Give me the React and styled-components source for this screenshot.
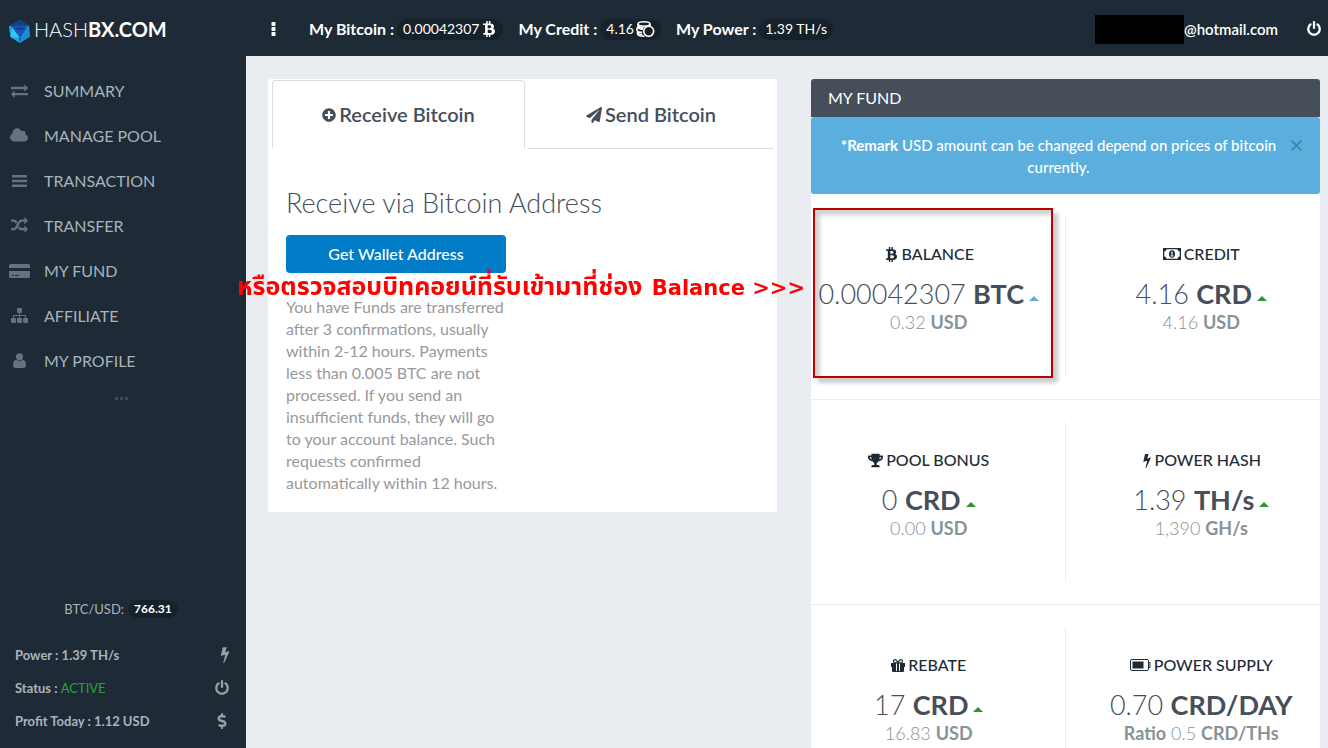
import React from "react";
import styled, { createGlobalStyle } from "styled-components";
import { FaBtc, FaPaperPlane, FaPlusCircle, FaTrophy, FaDollarSign } from "react-icons/fa";

const GlobalStyle = createGlobalStyle`
  * { box-sizing: border-box; }
  body {
    margin: 0;
    background: #e9ecf1;
    font-family: Lato, "Liberation Sans", sans-serif;
    font-size: 15px;
    line-height: 22px;
    color: #454e59;
  }
  b { font-weight: 700; }
`;

const Shell = styled.div`
  display: grid;
  grid-template-columns: 246px minmax(0, 1fr);
  height: 100vh;
  overflow-y: auto;
  scrollbar-width: none;
`;

const Sidebar = styled.aside`
  position: sticky;
  top: 0;
  height: 100vh;
  display: flex;
  flex-direction: column;
  background: #1e2b36;
  color: #a9b3bd;
`;

const Brand = styled.a`
  display: flex;
  align-items: center;
  gap: 4px;
  height: 56px;
  padding: 6px 9px 0;
  color: #fff;
  font-size: 20px;
  font-weight: 300;
  text-decoration: none;
  span { padding-bottom: 4px; }
`;

const Nav = styled.nav`
  padding-top: 12px;
`;

const NavLink = styled.a`
  display: grid;
  grid-template-columns: 22px 1fr;
  column-gap: 14px;
  align-items: center;
  height: 45px;
  padding-left: 8px;
  color: #a9b3bd;
  font-size: 16px;
  text-decoration: none;
  svg { justify-self: center; color: #66727e; }
`;

const More = styled.div`
  display: flex;
  justify-content: center;
  gap: 2px;
  padding: 14px 4px 0 0;
  i { width: 3px; height: 3px; background: #3f4b56; }
`;

const SideFoot = styled.div`
  margin-top: auto;
  padding-bottom: 11px;
  font-size: 13px;
`;

const Rate = styled.div`
  display: flex;
  align-items: center;
  justify-content: center;
  gap: 4px;
  height: 24px;
  margin-bottom: 17px;
  padding-right: 4px;
`;

const Pill = styled.span`
  display: inline-flex;
  align-items: center;
  gap: 2px;
  height: ${(p) => (p.$small ? 18 : 21)}px;
  padding: 0 6px;
  border-radius: 11px;
  background: #16212a;
  color: #fff;
  font-size: ${(p) => (p.$small ? 12 : 14)}px;
  font-weight: ${(p) => (p.$small ? 700 : 400)};
`;

const Stat = styled.div`
  display: flex;
  align-items: center;
  justify-content: space-between;
  height: 33px;
  padding: 0 16px 0 15px;
  font-weight: 700;
  em { color: #2f9e3f; font-style: normal; font-weight: 400; }
  svg { color: #9c9fa2; }
`;

const Column = styled.div`
  min-width: 0;
`;

const TopBar = styled.header`
  position: sticky;
  top: 0;
  z-index: 5;
  display: flex;
  align-items: center;
  height: 56px;
  padding: 2px 6px 0 0;
  background: #1e2b36;
  color: #fff;
`;

const IconButton = styled.button`
  display: inline-flex;
  align-items: center;
  justify-content: center;
  padding: 0;
  border: 0;
  background: none;
  color: inherit;
  cursor: pointer;
`;

const MenuButton = styled(IconButton)`
  width: 24px;
  margin: 0 24px 0 15px;
`;

const Figures = styled.div`
  display: flex;
  gap: 15px;
`;

const Figure = styled.div`
  display: flex;
  align-items: center;
  gap: 3px;
  font-size: 16px;
  font-weight: 700;
`;

const Account = styled.div`
  display: flex;
  align-items: center;
  margin: 0 28px 0 auto;
  font-weight: 600;
`;

const HiddenName = styled.span`
  width: 89px;
  height: 29px;
  background: #000;
`;

const Main = styled.main`
  display: grid;
  grid-template-columns: repeat(2, minmax(0, 1fr));
  align-items: start;
  gap: 34px;
  padding: 23px 8px 23px 22px;
`;

const Card = styled.section`
  position: relative;
  border-radius: 3px;
  background: #fff;
`;

const Tabs = styled.div`
  display: grid;
  grid-template-columns: 253px 1fr;
  gap: 3px;
  padding: 1px 3px 0 4px;
`;

const Tab = styled.button`
  display: flex;
  align-items: center;
  justify-content: center;
  gap: 3px;
  height: 69px;
  padding: 0 0 2px;
  border: 1px solid ${(p) => (p.$active ? "#ddd" : "transparent")};
  border-bottom-color: ${(p) => (p.$active ? "transparent" : "#ddd")};
  border-radius: ${(p) => (p.$active ? "4px 4px 0 0" : "0")};
  background: #fff;
  color: #454e59;
  font: 600 20px/28px Lato, sans-serif;
  cursor: pointer;
  svg { margin-top: 3px; }
`;

const Receive = styled.div`
  padding: 38px 18px 18px;
`;

const Heading = styled.h2`
  margin: 0 0 16px;
  font-size: 27px;
  line-height: 32px;
  font-weight: 300;
`;

const PrimaryButton = styled.button`
  display: block;
  width: 220px;
  height: 38px;
  border: 0;
  border-radius: 4px;
  background: #007dc6;
  color: #fff;
  font: 500 16px/22px Lato, sans-serif;
  cursor: pointer;
`;

const Note = styled.p`
  width: 224px;
  margin: 23px 0 0;
  color: #98999b;
  font-size: 16px;
`;

const CardTitle = styled.h3`
  margin: 0;
  padding: 8px 17px;
  border-radius: 3px 3px 0 0;
  background: #454e59;
  color: #fff;
  font-size: 16px;
  line-height: 22px;
  font-weight: 400;
`;

const Alert = styled.div`
  display: flex;
  align-items: flex-start;
  padding: 17px 16px 16px 18px;
  border-radius: 3px;
  background: #5bafdf;
  color: #fff;
  text-align: center;
  p { flex: 1; margin: 0; font-weight: 500; }
  button { width: 16px; height: 22px; color: #41819f; }
`;

const FundRow = styled.div`
  display: grid;
  grid-template-columns: repeat(2, minmax(0, 1fr));
  height: 205px;
  padding: 22px 0;
  & + & { border-top: 1px solid #ebedef; }
`;

const Fund = styled.article`
  position: relative;
  display: flex;
  flex-direction: column;
  align-items: center;
  padding: ${(p) => (p.$end ? "27px 0 0 18px" : "27px 18px 0 0")};
  border-right: 1px solid ${(p) => (p.$end ? "transparent" : "#ebedef")};
`;

const FundName = styled.h4`
  display: flex;
  align-items: center;
  gap: 3px;
  margin: 0 0 12px;
  color: #1e2b36;
  font-size: 16px;
  line-height: 22px;
  font-weight: 500;
`;

const Amount = styled.div`
  display: flex;
  align-items: center;
  gap: 5px;
  font-size: 27px;
  line-height: 34px;
  font-weight: 300;
  white-space: nowrap;
`;

const Caret = styled.i`
  margin-top: 8px;
  border: 5px solid transparent;
  border-top: 0;
  border-bottom-color: ${(p) => (p.$blue ? "#5bafdf" : "#2f9433")};
`;

const SubAmount = styled.div`
  color: #869398;
  font-size: 18px;
  font-weight: 300;
  white-space: nowrap;
`;

const Highlight = styled.div`
  position: absolute;
  inset: -8px 12px -1px 2px;
  border: 2px solid #c00000;
  box-shadow: 5px 5px 4px rgba(0, 0, 0, 0.2), inset 5px 5px 4px rgba(0, 0, 0, 0.18);
  pointer-events: none;
`;

const Callout = styled.div`
  position: absolute;
  z-index: 4;
  top: 190px;
  right: calc(100% + 6px);
  display: flex;
  align-items: baseline;
  justify-content: space-between;
  width: 568px;
  color: #f00;
  font: 700 21px/36px "DejaVu Sans", "Noto Sans Thai", sans-serif;
  white-space: nowrap;
`;

const Thai = styled.span`
  font-size: 25px;
`;

function Glyph({ w = 16, h = 16, box = "0 0 1792 1792", children }) {
  return (
    <svg width={w} height={h} viewBox={box} fill="currentColor" aria-hidden="true">
      {children}
    </svg>
  );
}

const Bolt = ({ size = 17 }) => (
  <Glyph w={10} h={size} box="410 0 950 1792">
    <path d="M1333 566q18 20 7 44l-540 1157q-13 25-42 25-4 0-14-2-17-5-25.5-19t-4.5-30l197-808-406 101q-4 1-12 1-18 0-31-11-18-15-13-39l201-825q4-16 18-26t32-10h328q19 0 32 12.5t13 29.5q0 8-5 18l-171 463 396-98q8-2 12-2 19 0 34 15z" />
  </Glyph>
);

const Power = () => (
  <Glyph>
    <path d="M1664 896q0 156-61 298t-164 245-245 164-298 61-298-61-245-164-164-245-61-298q0-182 80.5-343t226.5-270q43-32 95.5-25t83.5 50q32 42 24.5 94.5t-49.5 84.5q-98 74-151.5 181t-53.5 228q0 104 40.5 198.5t109.5 163.5 163.5 109.5 198.5 40.5 198.5-40.5 163.5-109.5 109.5-163.5 40.5-198.5q0-121-53.5-228t-151.5-181q-42-32-49.5-84.5t24.5-94.5q31-43 84-50t95 25q146 109 226.5 270t80.5 343zm-640-768v640q0 52-38 90t-90 38-90-38-38-90v-640q0-52 38-90t90-38 90 38 38 90z" />
  </Glyph>
);

const Exchange = () => (
  <Glyph w={17} h={17}>
    <path d="M1792 1184v192q0 13-9.5 22.5t-22.5 9.5h-1376v192q0 13-9.5 22.5t-22.5 9.5q-12 0-24-10l-319-320q-9-9-9-22 0-14 9-23l320-320q9-9 23-9 13 0 22.5 9.5t9.5 22.5v192h1376q13 0 22.5 9.5t9.5 22.5zm0-544q0 14-9 23l-320 320q-9 9-23 9-13 0-22.5-9.5t-9.5-22.5v-192h-1376q-13 0-22.5-9.5t-9.5-22.5v-192q0-13 9.5-22.5t22.5-9.5h1376v-192q0-14 9-23t23-9q12 0 24 10l319 319q9 9 9 23z" />
  </Glyph>
);

const Cloud = () => (
  <Glyph w={18} h={17} box="0 0 1920 1792">
    <path d="M1920 1152q0 159-112.5 271.5t-271.5 112.5h-1088q-185 0-316.5-131.5t-131.5-316.5q0-132 71-241.5t187-163.5q-2-28-2-43 0-212 150-362t362-150q158 0 286.5 88t187.5 230q70-62 166-62 106 0 181 75t75 181q0 75-41 138 129 30 213 134.5t84 239.5z" />
  </Glyph>
);

const Bars = () => (
  <Glyph w={15} h={12} box="0 0 15 12">
    <rect width="15" height="2.500" rx="0.600" />
    <rect y="4.750" width="15" height="2.500" rx="0.600" />
    <rect y="9.500" width="15" height="2.500" rx="0.600" />
  </Glyph>
);

const Random = () => (
  <Glyph w={17} h={17}>
    <path d="M666 481q-60 92-137 273-22-45-37-72.5t-40.5-63.5-51-56.5-63-35-81.5-14.5h-224q-14 0-23-9t-9-23v-192q0-14 9-23t23-9h224q250 0 410 225zm1126 799q0 14-9 23l-320 320q-9 9-23 9-13 0-22.5-9.5t-9.5-22.5v-192q-32 0-85 .5t-81 1-73-1-71-5-64-10.5-63-18.5-58-28.5-59-40-55-53.5-56-69.5q59-93 136-273 22 45 37 72.5t40.5 63.5 51 56.5 63 35 81.5 14.5h256v-192q0-14 9-23t23-9q12 0 24 10l319 319q9 9 9 23zm0-896q0 14-9 23l-320 320q-9 9-23 9-13 0-22.5-9.5t-9.5-22.5v-192h-256q-48 0-87 15t-69 45-51 61.5-45 77.5q-32 62-78 171-29 66-49.5 111t-54 105-64 100-74 83-90 68.5-106.5 42-128 16.5h-224q-14 0-23-9t-9-23v-192q0-14 9-23t23-9h224q48 0 87-15t69-45 51-61.5 45-77.5q32-62 78-171 29-66 49.5-111t54-105 64-100 74-83 90-68.5 106.5-42 128-16.5h256v-192q0-14 9-23t23-9q12 0 24 10l319 319q9 9 9 23z" />
  </Glyph>
);

const CreditCard = () => (
  <Glyph w={21} h={14} box="0 0 21 14">
    <path d="M1.5 0h18A1.5 1.5 0 0 1 21 1.5V4H0V1.500A1.500 1.500 0 0 1 1.500 0zM0 7h21v5.500a1.500 1.500 0 0 1-1.500 1.500h-18A1.500 1.500 0 0 1 0 12.500zm3 4v1h2v-1zm3 0v1h4v-1z" fillRule="evenodd" />
  </Glyph>
);

const Sitemap = () => (
  <Glyph w={17} h={15} box="0 0 17 15">
    <rect x="6" width="5" height="5" rx="1" />
    <rect y="10" width="5" height="5" rx="1" />
    <rect x="6" y="10" width="5" height="5" rx="1" />
    <rect x="12" y="10" width="5" height="5" rx="1" />
    <path d="M8.500 4v7M2.500 11V7.500h12V11" fill="none" stroke="currentColor" />
  </Glyph>
);

const User = () => (
  <Glyph w={13} h={15} box="0 0 13 15">
    <circle cx="6.500" cy="3.800" r="3.600" />
    <path d="M3.200 6.800C1 7 0 9.300 0 12.200 0 14 1 15 2.600 15h7.800c1.600 0 2.600-1 2.600-2.800 0-2.900-1-5.200-3.200-5.400a5 5 0 0 1-6.600 0z" />
  </Glyph>
);

const Dots = () => (
  <Glyph w={5} h={14} box="0 0 5 14">
    <rect x="0.500" width="4" height="4" rx="0.700" />
    <rect x="0.500" y="5" width="4" height="4" rx="0.700" />
    <rect x="0.500" y="10" width="4" height="4" rx="0.700" />
  </Glyph>
);

const Coins = () => (
  <Glyph w={19} h={17} box="0 0 19 17">
    <g fill="none" stroke="currentColor" strokeWidth="1.600">
      <ellipse cx="8" cy="3" rx="6" ry="2.200" />
      <path d="M2 3v3c0 1.300 2 2 5 2.200M14 3v2.500M1 6.500v2.700c0 1.300 2 2 5 2.200M1.500 9.500v3c0 1.600 3 2.700 7 2.700M2 5c1 1.300 3 1.700 5.500 1.700M1.300 12c1 1.100 3 1.500 5 1.500" />
      <circle cx="12.700" cy="10.300" r="5" />
    </g>
  </Glyph>
);

const Money = () => (
  <Glyph w={18} h={12} box="0 0 18 12">
    <path d="M0 0h18v12H0zm3.500 1.300A2.300 2.300 0 0 1 1.300 3.500v5a2.300 2.300 0 0 1 2.200 2.200h11a2.300 2.300 0 0 1 2.200-2.200v-5a2.300 2.300 0 0 1-2.200-2.200z" fillRule="evenodd" />
    <ellipse cx="9" cy="6" rx="3" ry="3.700" />
    <path d="M8 4.700l1-.9v4M7.700 8h2.600" stroke="#fff" fill="none" />
  </Glyph>
);

const Gift = () => (
  <Glyph w={14} h={13} box="0 0 14 13">
    <path d="M0 4h5v4H0zM9 4h5v4H9zM1 8h4v5H2a1 1 0 0 1-1-1zM9 8h4v4a1 1 0 0 1-1 1H9zM6 4h2v8H6z" />
    <path d="M7 3.800C6 1.600 5 .7 4 .7a1.500 1.500 0 0 0 0 3.100h6a1.500 1.500 0 0 0 0-3.100C9 .7 8 1.600 7 3.800zM5 12.500h4" fill="none" stroke="currentColor" strokeWidth="1.200" />
  </Glyph>
);

const Battery = () => (
  <Glyph w={21} h={12} box="0 0 21 12">
    <rect x="0.500" y="0.500" width="18" height="11" rx="1.500" fill="none" stroke="currentColor" />
    <path d="M18.500 3.500h1.500v5h-1.500" fill="none" stroke="currentColor" />
    <rect x="2.500" y="2.500" width="11" height="7" />
  </Glyph>
);

const Cross = () => (
  <svg width="11" height="11" viewBox="0 0 11 11" stroke="currentColor" strokeWidth="1.600" aria-hidden="true">
    <path d="M.5.5l10 10M10.500.5l-10 10" />
  </svg>
);

const Logo = () => (
  <svg width="21" height="23" viewBox="0 0 21 23" aria-hidden="true">
    <path d="M10.500 0L20 5.500 21 16.500 11 23 1.500 17 0 6z" fill="#1466b8" />
    <path d="M10.500 0L20 5.500 10 6.500 0 6z" fill="#153f86" />
    <path d="M0 6l4 1.500L9 17l2 6-9.500-6z" fill="#1aa7e8" />
    <path d="M20 5.500L21 16.500 11 23l1-6 5-9.500z" fill="#1d8ddb" />
    <path d="M3 7.500h14.500L11 17.500z" fill="#123b8d" />
    <path d="M3 7.500l8 3 6.500-3L11 17.500z" fill="#1a55b0" />
    <path d="M1.500 17L3 7.500l8 10z" fill="#38c3f5" />
  </svg>
);

const navItems = [
  ["SUMMARY", Exchange],
  ["MANAGE POOL", Cloud],
  ["TRANSACTION", Bars],
  ["TRANSFER", Random],
  ["MY FUND", CreditCard],
  ["AFFILIATE", Sitemap],
  ["MY PROFILE", User],
];

const funds = [
  [
    { name: "BALANCE", icon: <FaBtc size={15} />, value: "0.00042307", unit: "BTC", sub: <>0.32 <b>USD</b></>, caret: "blue", marked: true },
    { name: "CREDIT", icon: <Money />, value: "4.16", unit: "CRD", sub: <>4.16 <b>USD</b></>, caret: "green" },
  ],
  [
    { name: "POOL BONUS", icon: <FaTrophy size={15} />, value: "0", unit: "CRD", sub: <>0.00 <b>USD</b></>, caret: "green" },
    { name: "POWER HASH", icon: <Bolt size={15} />, value: "1.39", unit: "TH/s", sub: <>1,390 <b>GH/s</b></>, caret: "green" },
  ],
  [
    { name: "REBATE", icon: <Gift />, value: "17", unit: "CRD", sub: <>16.83 <b>USD</b></>, caret: "green" },
    { name: "POWER SUPPLY", icon: <Battery />, value: "0.70", unit: "CRD/DAY", sub: <><b>Ratio</b> 0.5 <b>CRD/THs</b></> },
  ],
];

export default function App() {
  return (
    <>
      <GlobalStyle />
      <Shell>
        <Sidebar>
          <Brand href="#">
            <Logo />
            <span>HASH<b>BX.COM</b></span>
          </Brand>
          <Nav>
            {navItems.map(([label, Icon]) => (
              <NavLink href="#" key={label}>
                <Icon />
                {label}
              </NavLink>
            ))}
          </Nav>
          <More><i /><i /><i /></More>
          <SideFoot>
            <Rate>BTC/USD: <Pill $small>766.31</Pill></Rate>
            <Stat>Power : 1.39 TH/s <Bolt /></Stat>
            <Stat><span>Status : <em>ACTIVE</em></span> <Power /></Stat>
            <Stat>Profit Today : 1.12 USD <FaDollarSign size={16} /></Stat>
          </SideFoot>
        </Sidebar>
        <Column>
          <TopBar>
            <MenuButton type="button" aria-label="Menu"><Dots /></MenuButton>
            <Figures>
              <Figure>My Bitcoin : <Pill>0.00042307 <FaBtc size={16} /></Pill></Figure>
              <Figure>My Credit : <Pill>4.16<Coins /></Pill></Figure>
              <Figure>My Power : <Pill>1.39 TH/s</Pill></Figure>
            </Figures>
            <Account><HiddenName />@hotmail.com</Account>
            <IconButton type="button" aria-label="Log out"><Power /></IconButton>
          </TopBar>
          <Main>
            <Card>
              <Tabs role="tablist">
                <Tab type="button" role="tab" aria-selected="true" $active>
                  <FaPlusCircle size={14} /> Receive Bitcoin
                </Tab>
                <Tab type="button" role="tab" aria-selected="false">
                  <FaPaperPlane size={16} /> Send Bitcoin
                </Tab>
              </Tabs>
              <Receive>
                <Heading>Receive via Bitcoin Address</Heading>
                <PrimaryButton type="button">Get Wallet Address</PrimaryButton>
                <Note>
                  You have Funds are transferred after 3 confirmations, usually within 2-12 hours. Payments
                  less than 0.005 BTC are not processed. If you send an insufficient funds, they will go to
                  your account balance. Such requests confirmed automatically within 12 hours.
                </Note>
              </Receive>
            </Card>
            <Card>
              <CardTitle>MY FUND</CardTitle>
              <Alert>
                <p><b>*Remark</b> USD amount can be changed depend on prices of bitcoin currently.</p>
                <IconButton type="button" aria-label="Close"><Cross /></IconButton>
              </Alert>
              {funds.map((row) => (
                <FundRow key={row[0].name}>
                  {row.map((f, i) => (
                    <Fund key={f.name} $end={i === 1}>
                      <FundName>{f.icon}{f.name}</FundName>
                      <Amount>
                        <span>{f.value} <b>{f.unit}</b></span>
                        {f.caret && <Caret $blue={f.caret === "blue"} />}
                      </Amount>
                      <SubAmount>{f.sub}</SubAmount>
                      {f.marked && <Highlight />}
                    </Fund>
                  ))}
                </FundRow>
              ))}
              <Callout>
                <Thai>หรือตรวจสอบบิทคอยน์ที่รับเข้ามาที่ช่อง</Thai>
                <span>Balance &gt;&gt;&gt;</span>
              </Callout>
            </Card>
          </Main>
        </Column>
      </Shell>
    </>
  );
}
